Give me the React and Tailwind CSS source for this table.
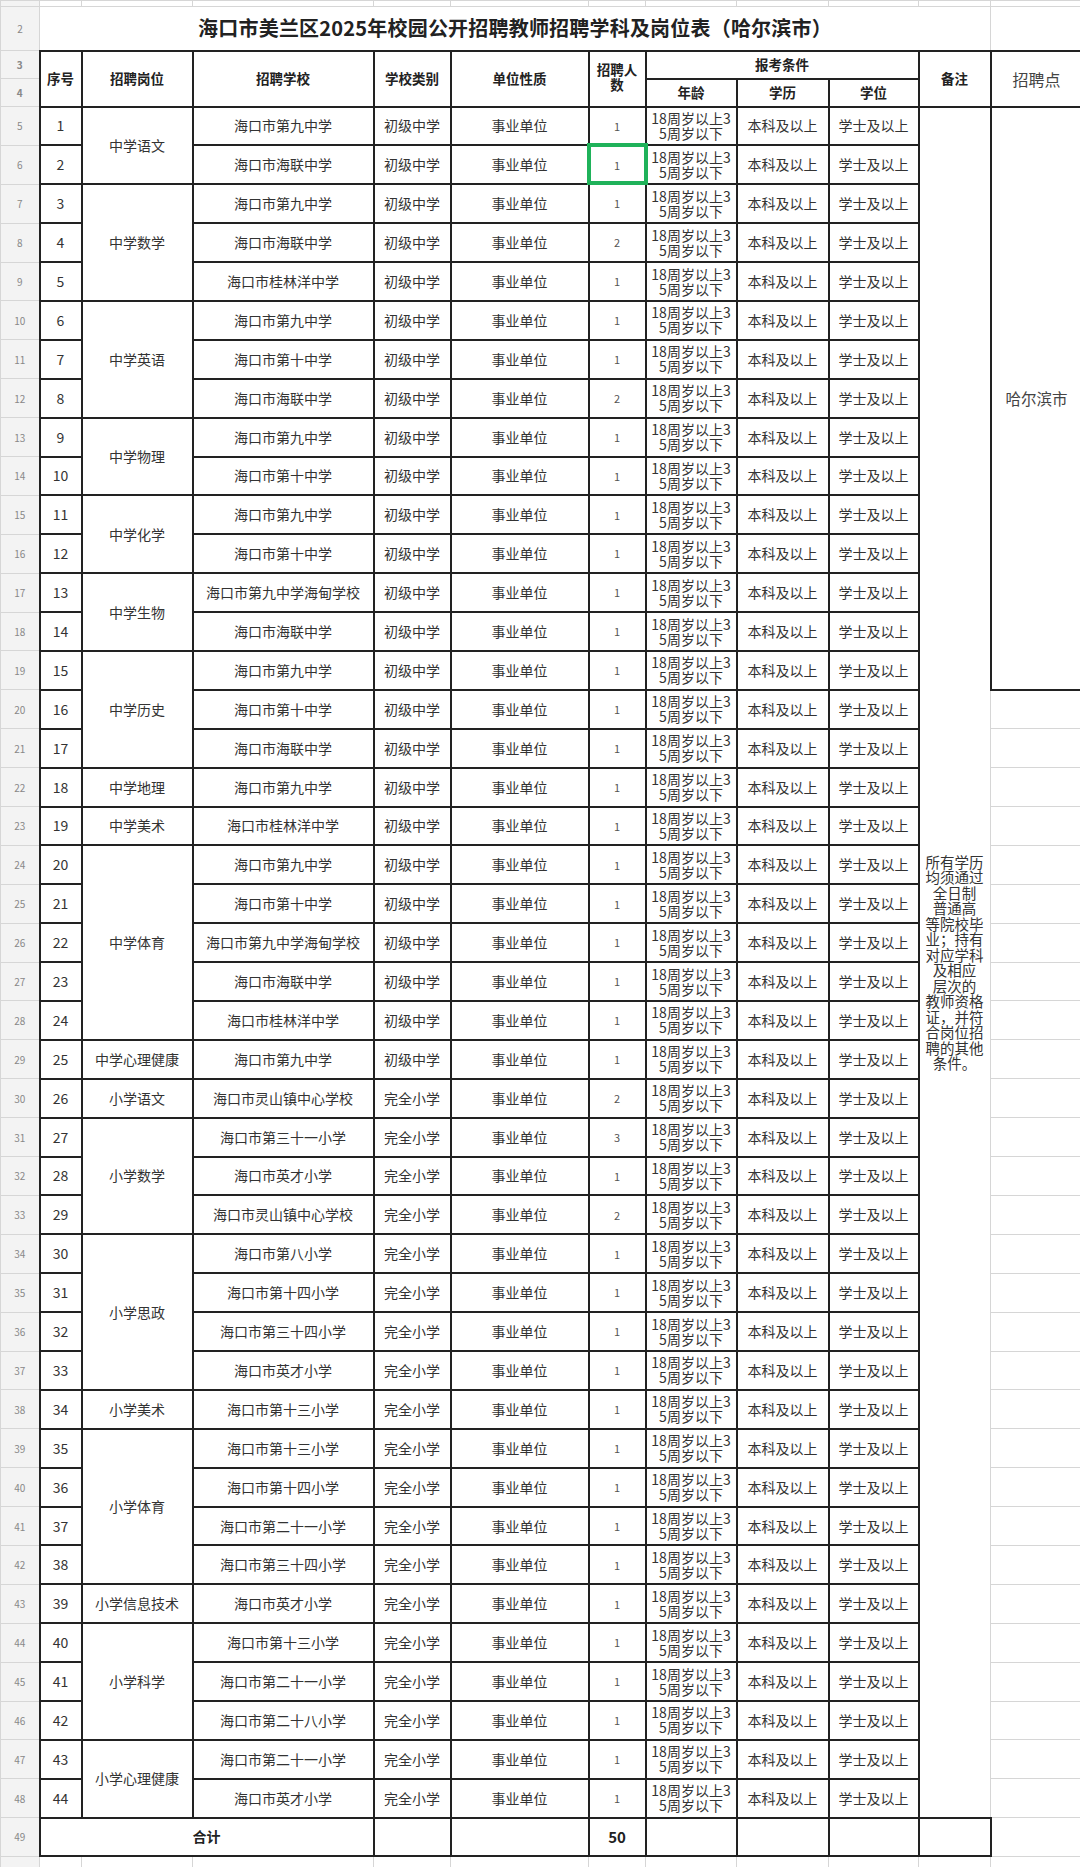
const GROUPS = [
    { post: '中学语文', type: '初级中学', rows: [['海口市第九中学', 1], ['海口市海联中学', 1]] },
    { post: '中学数学', type: '初级中学', rows: [['海口市第九中学', 1], ['海口市海联中学', 2], ['海口市桂林洋中学', 1]] },
    { post: '中学英语', type: '初级中学', rows: [['海口市第九中学', 1], ['海口市第十中学', 1], ['海口市海联中学', 2]] },
    { post: '中学物理', type: '初级中学', rows: [['海口市第九中学', 1], ['海口市第十中学', 1]] },
    { post: '中学化学', type: '初级中学', rows: [['海口市第九中学', 1], ['海口市第十中学', 1]] },
    { post: '中学生物', type: '初级中学', rows: [['海口市第九中学海甸学校', 1], ['海口市海联中学', 1]] },
    { post: '中学历史', type: '初级中学', rows: [['海口市第九中学', 1], ['海口市第十中学', 1], ['海口市海联中学', 1]] },
    { post: '中学地理', type: '初级中学', rows: [['海口市第九中学', 1]] },
    { post: '中学美术', type: '初级中学', rows: [['海口市桂林洋中学', 1]] },
    { post: '中学体育', type: '初级中学', rows: [['海口市第九中学', 1], ['海口市第十中学', 1], ['海口市第九中学海甸学校', 1], ['海口市海联中学', 1], ['海口市桂林洋中学', 1]] },
    { post: '中学心理健康', type: '初级中学', rows: [['海口市第九中学', 1]] },
    { post: '小学语文', type: '完全小学', rows: [['海口市灵山镇中心学校', 2]] },
    { post: '小学数学', type: '完全小学', rows: [['海口市第三十一小学', 3], ['海口市英才小学', 1], ['海口市灵山镇中心学校', 2]] },
    { post: '小学思政', type: '完全小学', rows: [['海口市第八小学', 1], ['海口市第十四小学', 1], ['海口市第三十四小学', 1], ['海口市英才小学', 1]] },
    { post: '小学美术', type: '完全小学', rows: [['海口市第十三小学', 1]] },
    { post: '小学体育', type: '完全小学', rows: [['海口市第十三小学', 1], ['海口市第十四小学', 1], ['海口市第二十一小学', 1], ['海口市第三十四小学', 1]] },
    { post: '小学信息技术', type: '完全小学', rows: [['海口市英才小学', 1]] },
    { post: '小学科学', type: '完全小学', rows: [['海口市第十三小学', 1], ['海口市第二十一小学', 1], ['海口市第二十八小学', 1]] },
    { post: '小学心理健康', type: '完全小学', rows: [['海口市第二十一小学', 1], ['海口市英才小学', 1]] },
];

const NOTE_LINES = ['所有学历', '均须通过', '全日制', '普通高', '等院校毕', '业；持有', '对应学科', '及相应', '层次的', '教师资格', '证，并符', '合岗位招', '聘的其他', '条件。'];

// flatten groups into sheet rows
const ROWS = [];
GROUPS.forEach((group) => {
    group.rows.forEach(([school, count], i) => {
        ROWS.push({
            post: i === 0 ? group.post : null,
            span: group.rows.length,
            school,
            type: group.type,
            count,
        });
    });
});

const GRID = 'border border-[#d6d6d6] p-0';
const CELL = 'border-2 border-[#222] p-0 text-center align-middle';
const HEAD = 'border border-[#d6d6d6] bg-[#f3f3f3] p-0 text-center align-middle text-[10px] text-[#888]';

function RowHead({ n }) {
    return <td className={HEAD}>{n}</td>;
}

export default function App() {
    const total = ROWS.reduce((sum, row) => sum + row.count, 0);

    return (
        <div className="w-[1080px] h-[1867px] overflow-hidden bg-white font-['Noto_Sans_CJK_SC','Noto_Sans',sans-serif] text-[#333]">
            <table className="border-collapse table-fixed w-[1082px]">
                <colgroup>
                    <col className="w-[39px]" />
                    <col className="w-[42px]" />
                    <col className="w-[111px]" />
                    <col className="w-[181px]" />
                    <col className="w-[77px]" />
                    <col className="w-[138px]" />
                    <col className="w-[57px]" />
                    <col className="w-[91px]" />
                    <col className="w-[92px]" />
                    <col className="w-[90px]" />
                    <col className="w-[72px]" />
                    <col className="w-[92px]" />
                </colgroup>
                <tbody>
                    <tr className="h-[6px]">
                        <td className={HEAD} />
                        {Array.from({ length: 11 }, (_, i) => <td key={i} className={GRID} />)}
                    </tr>
                    <tr className="h-[44px]">
                        <RowHead n={2} />
                        <td colSpan={10} className={`${GRID} text-center align-middle text-[20px] font-bold text-[#222] tracking-[0.2px]`}>
                            海口市美兰区2025年校园公开招聘教师招聘学科及岗位表（哈尔滨市）
                        </td>
                        <td className={GRID} />
                    </tr>
                    <tr className="h-[28px] text-[13.5px] font-bold text-[#222]">
                        <RowHead n={3} />
                        <td rowSpan={2} className={CELL}>序号</td>
                        <td rowSpan={2} className={CELL}>招聘岗位</td>
                        <td rowSpan={2} className={CELL}>招聘学校</td>
                        <td rowSpan={2} className={CELL}>学校类别</td>
                        <td rowSpan={2} className={CELL}>单位性质</td>
                        <td rowSpan={2} className={`${CELL} leading-[15px] pb-[4px]`}>招聘人<br />数</td>
                        <td colSpan={3} className={CELL}>报考条件</td>
                        <td rowSpan={2} className={CELL}>备注</td>
                        <td rowSpan={2} className={`${CELL} text-[16px] font-normal text-[#444]`}>招聘点</td>
                    </tr>
                    <tr className="h-[28px] text-[13.5px] font-bold text-[#222]">
                        <RowHead n={4} />
                        <td className={CELL}>年龄</td>
                        <td className={CELL}>学历</td>
                        <td className={CELL}>学位</td>
                    </tr>
                    {ROWS.map((row, i) => (
                        <tr key={i} className="h-[38.9px] text-[14px]">
                            <RowHead n={i + 5} />
                            <td className={CELL}>{i + 1}</td>
                            {row.post ? <td rowSpan={row.span} className={CELL}>{row.post}</td> : null}
                            <td className={`${CELL} whitespace-nowrap`}>{row.school}</td>
                            <td className={CELL}>{row.type}</td>
                            <td className={CELL}>事业单位</td>
                            <td className={`${CELL} text-[11px] text-[#555] ${i === 1 ? 'relative' : ''}`}>
                                {row.count}
                                {i === 1 ? <div className="absolute -left-[3px] -right-[3px] -top-[3px] -bottom-[2px] border-[4px] border-[#1fb25a]" /> : null}
                            </td>
                            <td className={`${CELL} leading-[15px] text-[#333]`}>18周岁以上3<br />5周岁以下</td>
                            <td className={CELL}>本科及以上</td>
                            <td className={CELL}>学士及以上</td>
                            {i === 0 ? (
                                <td rowSpan={ROWS.length} className="border-2 border-t-[#222] border-l-[#222] border-b-[#222] border-r border-r-[#d6d6d6] p-0 text-center align-middle text-[14.5px] leading-[15.5px] text-[#333]">
                                    {NOTE_LINES.map((line) => <div key={line}>{line}</div>)}
                                </td>
                            ) : null}
                            {i === 0 ? (
                                <td rowSpan={15} className={`${CELL} text-[15.5px] text-[#444]`}>哈尔滨市</td>
                            ) : i >= 15 ? <td className={GRID} /> : null}
                        </tr>
                    ))}
                    <tr className="h-[38.5px]">
                        <RowHead n={ROWS.length + 5} />
                        <td colSpan={3} className={`${CELL} text-[14px] font-bold text-[#222]`}>合计</td>
                        <td className={CELL} />
                        <td className={CELL} />
                        <td className={`${CELL} text-[15px] font-bold text-[#222]`}>{total}</td>
                        <td className={CELL} />
                        <td className={CELL} />
                        <td className={CELL} />
                        <td className={CELL} />
                        <td className={GRID} />
                    </tr>
                    <tr className="h-[30px]">
                        <td className={HEAD} />
                        {Array.from({ length: 11 }, (_, i) => <td key={i} className={GRID} />)}
                    </tr>
                </tbody>
            </table>
        </div>
    );
}
